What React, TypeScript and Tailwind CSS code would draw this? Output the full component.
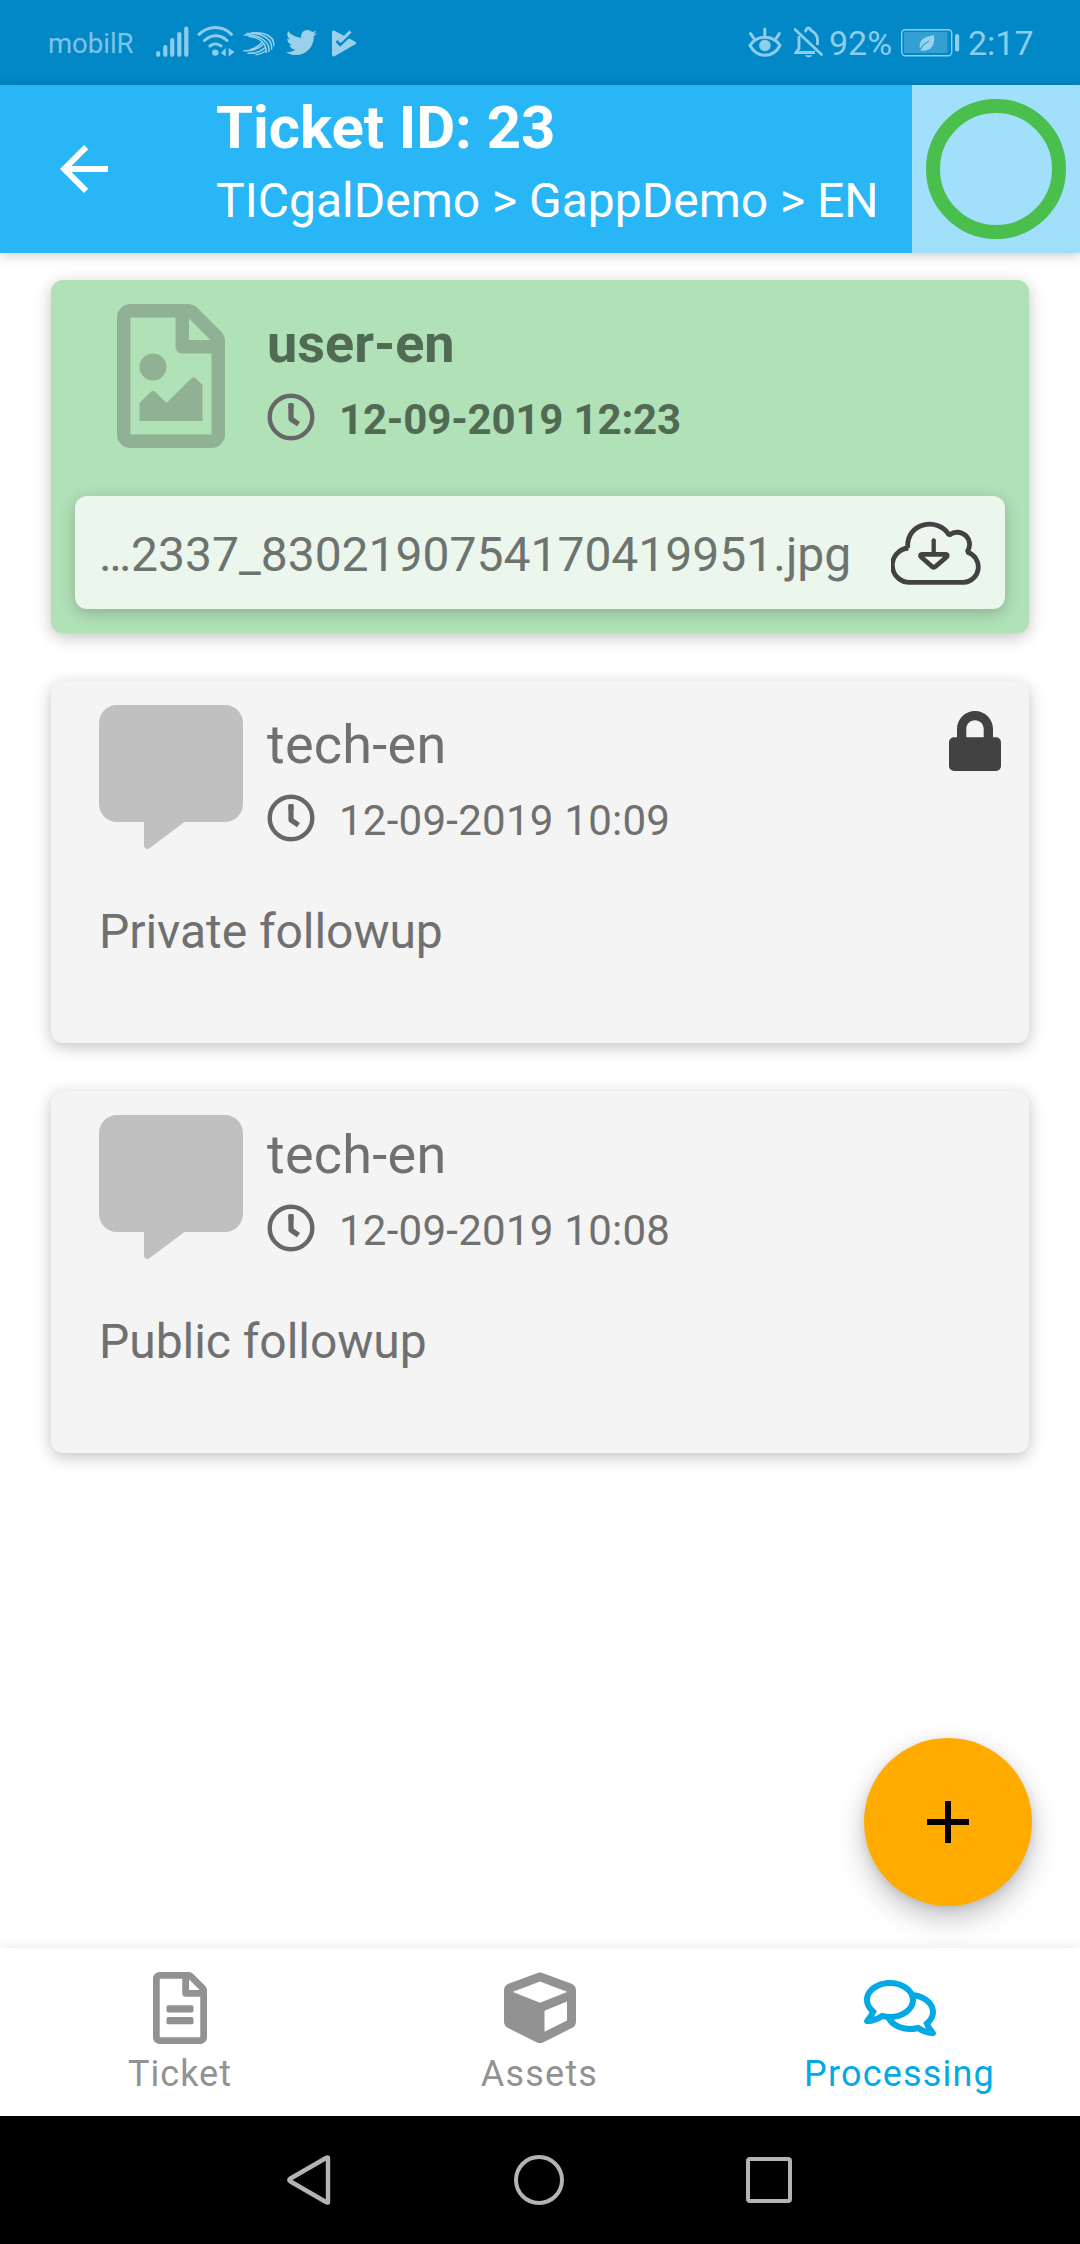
import React from "react";
import { FaCommentAlt, FaCube, FaRegComments, FaRegFileAlt, FaRegFileImage, FaTwitter } from "react-icons/fa";

function SignalIcon() {
  return (
    <svg width="33" height="32" viewBox="0 0 33 32" fill="none" stroke="currentColor" strokeWidth="4.2" strokeLinecap="round">
      <path d="M2.2 27.2V28.8M9.3 21V28.8M16.2 14.2V28.8M23.3 8V28.8M30.3 2.6V28.8" />
    </svg>
  );
}

function WifiIcon() {
  return (
    <svg width="38" height="32" viewBox="0 0 38 32" fill="none" stroke="currentColor" strokeWidth="3" strokeLinecap="round">
      <path d="M2 8.3C12-.7 25-.7 34.500 8.300M7.500 14.500C14.500 8.200 23 8.200 30 14.500M13 20C16.500 17.200 21 17.200 24 20" />
      <circle cx="18.300" cy="26.600" r="3.200" fill="currentColor" stroke="none" />
      <path d="M28.700 22V30.500L24 27zM31.700 22V30.500L37.500 26z" fill="currentColor" stroke="none" />
    </svg>
  );
}

function SwiftIcon() {
  return (
    <svg width="32" height="24" viewBox="0 0 32 24" fill="none" stroke="currentColor" strokeWidth="1.500" strokeLinecap="round">
      <path d="M9 1C20-.3 31.500 3.500 30.800 13.500M4 1.600C18 .5 29.500 6 28.600 17M1.500 3C14 2 27 8 26 19.500M6 4.500C15 5 23.500 10 23.300 20.500" />
      <path d="M1 18.800C9 19 15.500 17.500 20 12.500M5 21.300C12 21.800 17.500 19.500 21.500 16M13 22.800C17 22.500 20 21 22.500 19M8 17.300C12 16.500 15 15 18.500 10.800" />
    </svg>
  );
}

function PlayCheckIcon() {
  return (
    <svg width="25" height="27" viewBox="0 0 25 27">
      <path
        fill="currentColor"
        d="M0 2.200C0 .6 1.200 0 2.500.8L23.300 11.800C24.600 12.500 24.600 13.500 23.300 14.300L2.500 26.200C1.200 26.800 0 26 0 24.800z"
      />
      <path d="M4.500 11L8.200 15 19 4.500" fill="none" stroke="#0288c7" strokeWidth="2.600" />
      <path d="M8.300 11.300L18.500 1.500" fill="none" stroke="currentColor" strokeWidth="3" />
    </svg>
  );
}

function EyeIcon() {
  return (
    <svg width="34" height="31" viewBox="0 0 34 31" fill="none" stroke="currentColor" strokeWidth="3" strokeLinecap="round">
      <path d="M2 18.500C9 7.500 25 7.500 32 18.500 25 31.500 9 31.500 2 18.500zM2.500 6.500L5.500 11M31.300 6.500L28.500 11M16.800 2V8" />
      <circle cx="16.900" cy="18.500" r="5.800" fill="currentColor" stroke="none" />
    </svg>
  );
}

function BellOffIcon() {
  return (
    <svg width="29" height="32" viewBox="0 0 29 32" fill="none" stroke="currentColor" strokeWidth="2.800">
      <path d="M1 3.500L27.500 28.500" strokeLinecap="round" />
      <path d="M5 10V22.500L2 26.500H21M10.500 5.500C12 4.500 12.500 4.300 12.500 3.200C12.800 1.600 16 1.600 16 3.200C16 4.500 23.500 6 23.500 14V19" />
      <path d="M11 29.300H18C17.300 32 11.700 32 11 29.300z" fill="currentColor" stroke="none" />
    </svg>
  );
}

function BatteryIcon() {
  return (
    <svg width="59" height="28" viewBox="0 0 59 28" fill="none">
      <rect x=".7" y=".7" width="50" height="26" rx="3.500" stroke="currentColor" strokeWidth="1.400" />
      <rect x="3" y="3" width="43.500" height="21" rx="1" fill="#349fd2" />
      <rect x="54" y="5" width="4.200" height="17.500" rx="2" fill="currentColor" />
      <path d="M33 6C34.500 16 30 23 19.500 21.500 16.500 13 21 8 33 6z" fill="#9bd2ec" />
      <path d="M18.500 22C20.500 17.500 24 14 28 12" stroke="#349fd2" strokeWidth="1.200" />
    </svg>
  );
}

function ClockIcon() {
  return (
    <svg width="48" height="48" viewBox="0 0 48 48" fill="none" stroke="#676767">
      <circle cx="24" cy="24" r="21.300" strokeWidth="4.400" />
      <path d="M24 11.500V26L31.500 31.200" strokeWidth="5.200" strokeLinejoin="round" />
      <rect x="21.400" y="10" width="5.200" height="6" rx="1" fill="#676767" stroke="none" />
    </svg>
  );
}

function LockIcon() {
  return (
    <svg width="52" height="60" viewBox="0 0 52 60" fill="#424242">
      <path d="M8 28V18C8 8 16 0 26 0S44 8 44 18V28H34.700V18C34.700 13 31 9.300 26 9.300S17.300 13 17.300 18V28z" />
      <rect y="26.300" width="52" height="33.700" rx="5" />
    </svg>
  );
}

function CloudDownloadIcon() {
  return (
    <svg width="90" height="64" viewBox="0 0 90 64" fill="none" stroke="#424242" strokeWidth="4.800">
      <path d="M17.500 27A17.200 17.200 0 0 0 19.700 61.400H72.500A15.500 15.500 0 0 0 76 31C80.500 25 79 16 71.500 12.500 67 10.500 62 11.300 58 14.200C48-4 15 .5 16.700 27z" strokeLinejoin="bevel" />
      <path d="M42.700 19.500V33" strokeLinecap="round" strokeWidth="4.300" />
      <path d="M31 33.300H54.500C56.500 33.300 56.500 35 55.500 36L44.500 45.500C43.300 46.500 42.300 46.500 41 45.500L30.200 36C29 35 29.500 33.300 31 33.300z" />
    </svg>
  );
}

function StatusBar() {
  return (
    <div className="flex h-[85px] shrink-0 items-start bg-[#0288c7] text-[#8ccdec]">
      <div className="ml-12 mt-[26px] w-[108px] text-[27.500px] leading-9 text-[#7dc3e6]">mobilR</div>
      <div className="mt-[26px]"><SignalIcon /></div>
      <div className="ml-2 mt-[26px]"><WifiIcon /></div>
      <div className="ml-2 mt-8 text-[#9bd0ea]"><SwiftIcon /></div>
      <FaTwitter size={31} className="ml-[11px] mt-[27px] text-[#9bd0ea]" />
      <div className="ml-[15px] mt-[30px] text-[#9bd0ea]"><PlayCheckIcon /></div>
      <div className="ml-auto mt-[27px]"><EyeIcon /></div>
      <div className="ml-3 mt-[26px]"><BellOffIcon /></div>
      <div className="ml-[6px] mt-[22px] w-[72px] whitespace-nowrap text-[34px] leading-[42px]">92%</div>
      <div className="mt-[29px]"><BatteryIcon /></div>
      <div className="ml-2 mt-[22px] w-[112px] text-[34px] leading-[42px]">2:17</div>
    </div>
  );
}

function Header() {
  return (
    <header className="z-10 flex h-[168px] shrink-0 bg-[#29b6f6] text-white shadow-[0_2px_12px_rgba(0,0,0,0.22)]">
      <div className="flex w-[216px] items-center pl-[60px]">
        <svg width="48" height="48" viewBox="4 4 16 16" fill="currentColor">
          <path d="M20 11H7.830l5.590-5.590L12 4l-8 8 8 8 1.410-1.410L7.830 13H20v-2z" />
        </svg>
      </div>
      <div className="flex-1 whitespace-nowrap pt-2">
        <h1 className="text-[60px] font-bold leading-[70px] tracking-[-0.1px]">Ticket ID: 23</h1>
        <p className="mt-[10px] text-[48px] leading-[56px]">TICgalDemo &gt; GappDemo &gt; EN</p>
      </div>
      <div className="flex w-[168px] items-center justify-center bg-[#a1dffb]">
        <div className="size-[140px] rounded-full border-[14px] border-[#4abf4e]" />
      </div>
    </header>
  );
}

interface EntryProps {
  user: string;
  date: string;
  text?: string;
  file?: string;
  locked?: boolean;
}

function Entry({ user, date, text, file, locked }: EntryProps) {
  return (
    <article
      className={
        file
          ? "h-[353px] rounded-xl bg-[#b1e1b7] px-6 pt-6 text-[#516a54] shadow-[0_4px_16px_rgba(0,0,0,0.24)]"
          : "h-[362px] rounded-xl bg-[#f4f4f4] px-6 pt-6 text-[#707070] shadow-[0_4px_16px_rgba(0,0,0,0.24)]"
      }
    >
      <div className="flex h-36 px-6">
        <div className="flex w-36 justify-center">
          {file ? <FaRegFileImage className="h-36 w-[108px] text-[#91b194]" /> : <FaCommentAlt className="size-36 text-[#c0c0c0]" />}
        </div>
        <div className={file ? "ml-6 flex-1 pt-2 font-bold" : "ml-6 flex-1 pt-2 tracking-[0.26px]"}>
          <div className="text-[54px] leading-[64px]">{user}</div>
          <div className="mt-[19px] flex items-start text-[42px] leading-[50px]">
            <div className="-mt-[2px]"><ClockIcon /></div>
            <span className={file ? "ml-6 tracking-[-0.16px]" : "ml-6"}>{date}</span>
          </div>
        </div>
        {locked && <div className="-mr-[20px] mt-[6px]"><LockIcon /></div>}
      </div>
      {text && <p className="mt-[55px] px-6 text-[48px] leading-[56px] tracking-[-0.05px]">{text}</p>}
      {file && (
        <div className="mt-12 flex h-[113px] items-center justify-between rounded-xl bg-[#ebf6ed] px-6 text-[48px] text-[#6d736e] shadow-[0_4px_16px_rgba(0,0,0,0.22)]">
          <span className="mt-[5px] whitespace-nowrap">{file}</span>
          <CloudDownloadIcon />
        </div>
      )}
    </article>
  );
}

function Tabs() {
  return (
    <nav className="z-10 grid h-[168px] shrink-0 grid-cols-3 bg-white text-[36px] leading-[42px] tracking-[1.2px] text-[#929292] shadow-[0_0_12px_rgba(0,0,0,0.1)]">
      <div className="flex flex-col items-center gap-[9px] pt-6">
        <FaRegFileAlt size={72} />
        <span className="tracking-[1px]">Ticket</span>
      </div>
      <div className="flex flex-col items-center gap-[9px] pt-6">
        <FaCube size={72} />
        <span className="-ml-px">Assets</span>
      </div>
      <div className="flex flex-col items-center gap-[9px] pt-6 text-[#03a9e4]">
        <FaRegComments className="h-[72px] w-[72px]" />
        <span className="-ml-px">Processing</span>
      </div>
    </nav>
  );
}

function SystemNav() {
  return (
    <div className="flex h-32 shrink-0 items-center justify-between bg-black pl-[286px] pr-[288px]">
      <svg width="46" height="52" viewBox="0 0 46 52" fill="none" stroke="#b4b4b4" strokeWidth="4.400" strokeLinejoin="round">
        <path d="M42 4V48.500Q42 49 40 48L4.500 27.500Q2 26 4.500 24.500L40 4Q42 3 42 4z" />
      </svg>
      <div className="size-[50px] rounded-full border-[4px] border-[#b4b4b4]" />
      <div className="size-[46px] rounded-[4px] border-[4px] border-[#b4b4b4]" />
    </div>
  );
}

export default function App() {
  return (
    <div className="relative flex h-[2244px] w-[1080px] flex-col overflow-hidden bg-white font-['Roboto',sans-serif]">
      <StatusBar />
      <Header />
      <main className="flex flex-1 flex-col gap-12 px-[51px] pt-[27px]">
        <Entry user="user-en" date="12-09-2019 12:23" file="…2337_8302190754170419951.jpg" />
        <Entry user="tech-en" date="12-09-2019 10:09" text="Private followup" locked />
        <Entry user="tech-en" date="12-09-2019 10:08" text="Public followup" />
      </main>
      <button className="absolute bottom-[338px] right-12 flex size-[168px] items-center justify-center rounded-full bg-[#ffab00] shadow-[0_12px_28px_rgba(0,0,0,0.24),0_2px_8px_rgba(0,0,0,0.1)]">
        <svg width="42" height="42" viewBox="0 0 42 42" stroke="#000" strokeWidth="6">
          <path d="M21 0V42M0 21H42" />
        </svg>
      </button>
      <Tabs />
      <SystemNav />
    </div>
  );
}
